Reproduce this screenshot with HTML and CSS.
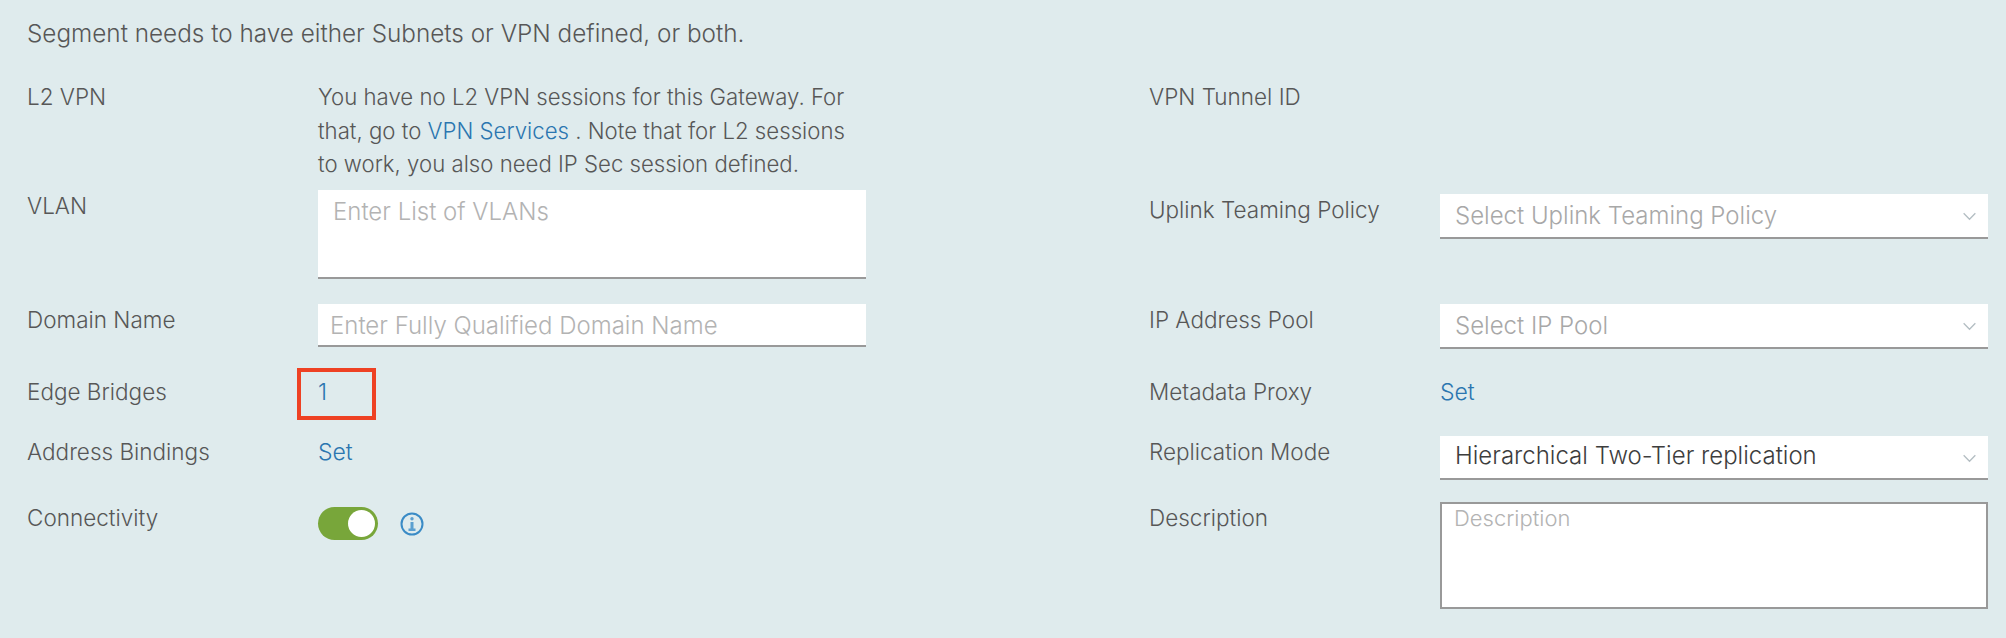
FILE: index.html
```html
<!DOCTYPE html>
<html lang="en">
<head>
  <meta charset="UTF-8" />
  <title>Segment settings</title>
  <link rel="stylesheet" href="styles.css">
</head>
<body>
  <p class="intro">Segment needs to have either Subnets or VPN defined, or both.</p>

  <form class="form-grid">
    <label class="label">L2 VPN</label>
    <p class="note">You have no L2 VPN sessions for this Gateway. For that, go to <a href="#">VPN Services</a> . Note that for L2 sessions to work, you also need IP Sec session defined.</p>
    <label class="label right">VPN Tunnel ID</label>
    <div></div>

    <label class="label">VLAN</label>
    <textarea class="field vlan" placeholder="Enter List of VLANs"></textarea>
    <label class="label right lower">Uplink Teaming Policy</label>
    <div class="select-wrap lower">
      <select class="field placeholder">
        <option>Select Uplink Teaming Policy</option>
      </select>
      <svg class="chevron" viewBox="0 0 16 10"><path d="M1.5 1.5 L8 8 L14.500 1.5" /></svg>
    </div>

    <label class="label">Domain Name</label>
    <input class="field domain" type="text" placeholder="Enter Fully Qualified Domain Name">
    <label class="label right">IP Address Pool</label>
    <div class="select-wrap">
      <select class="field placeholder">
        <option>Select IP Pool</option>
      </select>
      <svg class="chevron" viewBox="0 0 16 10"><path d="M1.5 1.5 L8 8 L14.500 1.5" /></svg>
    </div>

    <label class="label">Edge Bridges</label>
    <div class="value">
      <a href="#">1</a>
      <span class="highlight"></span>
    </div>
    <label class="label right">Metadata Proxy</label>
    <div class="value"><a href="#">Set</a></div>

    <label class="label">Address Bindings</label>
    <div class="value"><a href="#">Set</a></div>
    <label class="label right">Replication Mode</label>
    <div class="select-wrap">
      <select class="field short">
        <option>Hierarchical Two-Tier replication</option>
      </select>
      <svg class="chevron" viewBox="0 0 16 10"><path d="M1.5 1.5 L8 8 L14.500 1.5" /></svg>
    </div>

    <label class="label">Connectivity</label>
    <div class="toggle-row">
      <span class="toggle"><span class="knob"></span></span>
      <svg class="info" viewBox="0 0 24 24">
        <circle cx="12" cy="12" r="10.500" />
        <circle class="fill" cx="12" cy="6.800" r="1.700" />
        <path class="fill" d="M10.500 10 H13.500 V16.500 H15.500 V19 H8.500 V16.500 H10.500 Z" />
      </svg>
    </div>
    <label class="label right">Description</label>
    <textarea class="description" placeholder="Description"></textarea>
  </form>
</body>
</html>
```

FILE: styles.css
```css
body {
  margin: 0;
  height: 638px;
  overflow: hidden;
  padding-left: 27px;
  background: #dfebed;
  color: #575757;
  font-family: Inter, 'Liberation Sans', sans-serif;
  font-size: 22.500px;
  font-weight: 300;
  line-height: 34px;
}

a {
  color: #2b76b0;
  text-decoration: none;
}

.intro {
  margin: 0;
  padding-top: 16px;
  height: 80px;
  box-sizing: border-box;
  font-size: 24.300px;
}

.form-grid {
  display: grid;
  grid-template-columns: 291px 548px 283px 291px 548px;
  grid-template-rows: 109px 114px 72px 60px 66px auto;
  align-items: start;
}

.label {
  display: block;
}

.right {
  grid-column: 4;
}

.lower {
  margin-top: 4px;
}

.note {
  margin: 0;
  font-size: 22.200px;
  line-height: 33.600px;
}

.value {
  position: relative;
  font-size: 23px;
}

.highlight {
  position: absolute;
  left: -21px;
  top: -7px;
  width: 71px;
  height: 44px;
  border: 4px solid #ee4123;
}

.field {
  display: block;
  width: 100%;
  box-sizing: border-box;
  margin: 1px 0 0;
  border: 0;
  border-bottom: 2px solid #999;
  border-radius: 0;
  outline: 0;
  background: #fff;
  color: #3d3d3d;
  font: inherit;
  font-size: 24px;
  resize: none;
  appearance: none;
}

.field::placeholder,
.description::placeholder {
  color: #b3b3b3;
  opacity: 1;
}

.vlan {
  height: 89px;
  padding: 5px 15px 0;
}

.domain {
  height: 43px;
  padding: 2px 12px 0;
}

select.field {
  height: 45px;
  padding: 0 40px 0 15px;
}

select.placeholder {
  color: #a8a8a8;
}

select.short {
  height: 44px;
  padding-bottom: 2px;
}

.select-wrap {
  position: relative;
}

.chevron {
  position: absolute;
  right: 11px;
  top: 50%;
  width: 15px;
  height: 9px;
  margin-top: -4px;
  pointer-events: none;
}

.chevron path {
  fill: none;
  stroke: #b4bec3;
  stroke-width: 1.5;
}

.toggle-row {
  display: flex;
  align-items: center;
  gap: 22px;
  margin-top: 6px;
}

.toggle {
  display: flex;
  justify-content: flex-end;
  align-items: center;
  width: 60px;
  height: 33px;
  padding-right: 3px;
  box-sizing: border-box;
  border-radius: 17px;
  background: #78a63a;
}

.knob {
  width: 27px;
  height: 27px;
  border-radius: 50%;
  background: #fff;
}

.info {
  width: 24px;
  height: 24px;
}

.info circle {
  fill: none;
  stroke: #3a8bc6;
  stroke-width: 2;
}

.info .fill {
  fill: #5b9fd0;
  stroke: none;
}

.description {
  display: block;
  width: 100%;
  height: 107px;
  box-sizing: border-box;
  margin: 1px 0 0;
  padding: 0 12px;
  border: 2px solid #999;
  border-radius: 0;
  outline: 0;
  background: #fff;
  font-family: inherit;
  font-size: 22px;
  font-weight: 300;
  line-height: 28px;
  resize: none;
}
```
